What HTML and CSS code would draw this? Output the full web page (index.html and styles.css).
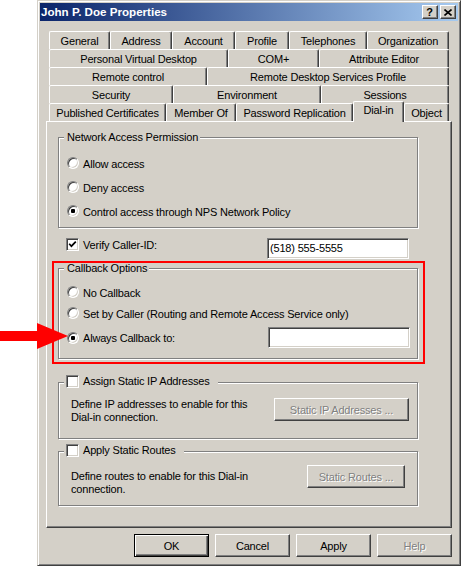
FILE: index.html
```html
<!DOCTYPE html>
<html>
<head>
<meta charset="utf-8">
<title>John P. Doe Properties</title>
<link rel="stylesheet" href="styles.css">
</head>
<body>
<div class="screen">
  <div class="window">
    <div class="titlebar">
      <span class="title">John P. Doe Properties</span>
      <div class="caption-btns">
        <span class="cbtn cbtn-help">?</span>
        <span class="cbtn"><svg width="8" height="7" viewBox="0 0 8 7"><path d="M0.5 0.5 L7.5 6.5 M7.5 0.5 L0.5 6.5" stroke="#000" stroke-width="1.6" fill="none"/></svg></span>
      </div>
    </div>
    <div class="content">
      <div class="tabs">
        <div class="tabrow">
          <div class="tab t-general">General</div>
          <div class="tab t-address">Address</div>
          <div class="tab t-account">Account</div>
          <div class="tab t-profile">Profile</div>
          <div class="tab t-telephones">Telephones</div>
          <div class="tab t-organization">Organization</div>
        </div>
        <div class="tabrow">
          <div class="tab t-pvd">Personal Virtual Desktop</div>
          <div class="tab t-com">COM+</div>
          <div class="tab t-attr">Attribute Editor</div>
        </div>
        <div class="tabrow">
          <div class="tab t-remote">Remote control</div>
          <div class="tab t-rds">Remote Desktop Services Profile</div>
        </div>
        <div class="tabrow">
          <div class="tab t-security">Security</div>
          <div class="tab t-env">Environment</div>
          <div class="tab t-sessions">Sessions</div>
        </div>
        <div class="tabrow">
          <div class="tab t-pub">Published Certificates</div>
          <div class="tab t-member">Member Of</div>
          <div class="tab t-pwd">Password Replication</div>
          <div class="tab t-dialin selected">Dial-in</div>
          <div class="tab t-object">Object</div>
        </div>
      </div>
      <div class="panel">
        <fieldset class="group group-nap">
          <legend class="legend">Network Access Permission</legend>
          <div class="radio-row"><span class="radio"></span><span class="opt">Allow access</span></div>
          <div class="radio-row"><span class="radio"></span><span class="opt">Deny access</span></div>
          <div class="radio-row"><span class="radio checked"></span><span class="opt">Control access through NPS Network Policy</span></div>
        </fieldset>

        <div class="verify-row">
          <span class="checkbox"><svg width="9" height="9" viewBox="0 0 9 9"><path d="M1.2 3.8 L3.4 6.2 L7.8 1.6" stroke="#000" stroke-width="1.7" fill="none"/></svg></span>
          <span class="check-label verify-label">Verify Caller-ID:</span>
          <span class="textbox">(518) 555-5555</span>
        </div>

        <div class="highlight">
          <fieldset class="group group-callback">
            <legend class="legend">Callback Options</legend>
            <div class="cb-row"><span class="radio"></span><span class="opt">No Callback</span></div>
            <div class="cb-row cb-row2"><span class="radio"></span><span class="opt">Set by Caller (Routing and Remote Access Service only)</span></div>
            <div class="cb-row cb-row3"><span class="radio checked"></span><span class="opt">Always Callback to:</span><span class="textbox textbox-callback"></span></div>
          </fieldset>
        </div>

        <fieldset class="group group-ip">
          <legend class="legend legend-check"><span class="checkbox"></span><span class="check-label">Assign Static IP Addresses</span></legend>
          <div class="group-body">
            <div class="desc">Define IP addresses to enable for this<br>Dial-in connection.</div>
            <span class="btn disabled btn-ip">Static IP Addresses ...</span>
          </div>
        </fieldset>

        <fieldset class="group group-routes">
          <legend class="legend legend-check"><span class="checkbox"></span><span class="check-label">Apply Static Routes</span></legend>
          <div class="group-body">
            <div class="desc desc-routes">Define routes to enable for this Dial-in<br>connection.</div>
            <span class="btn disabled btn-routes">Static Routes ...</span>
          </div>
        </fieldset>
      </div>
      <div class="buttons">
        <span class="btn btn-default">OK</span>
        <span class="btn">Cancel</span>
        <span class="btn">Apply</span>
        <span class="btn disabled">Help</span>
      </div>
    </div>
  </div>
  <svg class="arrow" width="70" height="28" viewBox="0 0 70 28"><polygon points="0,9 37,9 37,1 68,14 37,27 37,19 0,19" fill="#f00"/></svg>
</div>
</body>
</html>
```
FILE: styles.css
```css
* { box-sizing: border-box; }
html, body { margin: 0; padding: 0; background: #fff; }
body {
  font-family: "Liberation Sans", Arial, sans-serif;
  font-size: 11px;
  letter-spacing: -0.18px;
  color: #000;
}
.screen {
  position: relative;
  width: 461px;
  height: 567px;
  padding-left: 37px;
  overflow: hidden;
}
.window {
  width: 424px;
  height: 566px;
  background: #d4d0c8;
  border: 1px solid;
  border-color: #d4d0c8 #404040 #404040 #d4d0c8;
  box-shadow: inset 1px 1px #fff, inset -1px -1px #808080;
  padding: 2px;
  display: flex;
  flex-direction: column;
}
.titlebar {
  height: 18px;
  flex: none;
  display: flex;
  align-items: center;
  background: linear-gradient(to right, #0a246a, #a6caf0);
  padding: 0 2px 0 1px;
}
.title {
  flex: 1;
  color: #fff;
  font-weight: bold;
  font-size: 11.6px;
  letter-spacing: 0;
  line-height: 18px;
}
.caption-btns { display: flex; gap: 2px; }
.cbtn {
  width: 16px;
  height: 14px;
  background: #d4d0c8;
  border: 1px solid;
  border-color: #fff #404040 #404040 #fff;
  box-shadow: inset -1px -1px #808080;
  display: flex;
  align-items: center;
  justify-content: center;
  padding-right: 1px;
}
.cbtn-help {
  font-weight: bold;
  font-size: 11px;
  line-height: 12px;
  letter-spacing: 0;
}
.content {
  padding: 10px 6px 0 6px;
}
.tabs { padding: 0 3px; }
.tabrow { display: flex; height: 18px; }
.tab {
  flex: none;
  height: 18px;
  border-top: 1px solid #fff;
  border-left: 1px solid #fff;
  border-right: 1px solid #404040;
  border-top-left-radius: 2px;
  border-top-right-radius: 2px;
  box-shadow: inset -1px 0 #808080;
  text-align: center;
  padding-top: 1px;
  line-height: 16px;
  white-space: nowrap;
  background: #d4d0c8;
}
.tab.selected {
  position: relative;
  z-index: 1;
  height: 21px;
  margin-top: -2px;
  margin-bottom: -1px;
  padding-top: 1px;
  line-height: 15px;
}
.t-general { width: 61px; }
.t-address { width: 62px; }
.t-account { width: 63px; }
.t-profile { width: 54px; }
.t-telephones { width: 78px; }
.t-organization { width: 82px; }
.t-pvd { width: 179px; }
.t-com { width: 91px; }
.t-attr { width: 130px; }
.t-remote { width: 158px; }
.t-rds { width: 242px; }
.t-security { width: 124px; }
.t-env { width: 148px; }
.t-sessions { width: 128px; }
.t-pub { width: 117px; }
.t-member { width: 70px; }
.t-pwd { width: 117px; }
.t-dialin { width: 51px; }
.t-object { width: 45px; }

.panel {
  height: 407px;
  border: 1px solid;
  border-color: #fff #404040 #404040 #fff;
  box-shadow: inset -1px -1px #808080;
  padding: 0 26px 0 5px;
}
.group {
  margin: 0 0 0 6px;
  min-width: 0;
  width: 360px;
  border: 1px solid #808080;
  box-shadow: inset 1px 1px #fff, 1px 1px #fff;
  padding: 0 8px 0 5px;
}
.legend {
  line-height: 11px;
  padding: 0 2px 0 3px;
  background: #d4d0c8;
  white-space: nowrap;
}
.group-nap {
  margin-top: 10px;
  padding-top: 8px;
  padding-bottom: 4px;
}
.radio-row {
  height: 24px;
  display: flex;
  align-items: center;
  gap: 4px;
  padding-left: 3px;
}
.opt { padding-top: 1px; white-space: nowrap; }
.radio {
  flex: none;
  position: relative;
  width: 12px;
  height: 12px;
  border-radius: 50%;
  background: #fff;
  border: 1px solid;
  border-color: #808080 #fff #fff #808080;
  box-shadow: inset 1px 1px #404040, inset -1px -1px #d4d0c8;
}
.radio.checked::after {
  content: "";
  position: absolute;
  left: 3px;
  top: 3px;
  width: 4px;
  height: 4px;
  border-radius: 1px;
  background: #000;
}
.checkbox {
  flex: none;
  width: 13px;
  height: 13px;
  background: #fff;
  border: 1px solid;
  border-color: #808080 #fff #fff #808080;
  box-shadow: inset 1px 1px #404040, inset -1px -1px #d4d0c8;
  display: flex;
  align-items: center;
  justify-content: center;
}
.check-label {
  line-height: 13px;
  margin-left: 4px;
  white-space: nowrap;
}
.verify-label { padding-top: 1px; }
.verify-row {
  margin-top: 10px;
  height: 21px;
  display: flex;
  align-items: flex-start;
  padding: 0 16px 0 14px;
}
.textbox {
  margin-left: auto;
  width: 142px;
  height: 21px;
  background: #fff;
  border: 1px solid;
  border-color: #808080 #fff #fff #808080;
  box-shadow: inset 1px 1px #404040, inset -1px -1px #d4d0c8;
  padding: 3px 2px 0 2px;
  line-height: 13px;
  white-space: nowrap;
}
.highlight {
  margin-top: 2px;
  border: 2px solid #f00;
  padding: 0 5px 3px 4px;
}
.highlight .group { margin-left: 0; }
.group-callback {
  padding-top: 10px;
  padding-bottom: 10px;
  padding-right: 7px;
}
.cb-row {
  height: 16px;
  display: flex;
  align-items: center;
  gap: 4px;
  padding-left: 3px;
}
.cb-row2 { margin-top: 5px; }
.cb-row3 { margin-top: 6px; height: 21px; }
.textbox-callback { width: 142px; }

.legend-check {
  display: flex;
  align-items: flex-start;
  height: 15px;
  line-height: 13px;
  padding: 0 8px 0 2px;
}
.group-ip {
  margin-top: 11px;
  padding-top: 7px;
  padding-bottom: 14px;
}
.group-routes {
  margin-top: 5px;
  padding-top: 6px;
  padding-bottom: 9px;
  padding-right: 12px;
}
.group-body {
  display: flex;
  align-items: flex-start;
}
.desc {
  line-height: 13px;
  margin-left: 7px;
  padding-top: 1px;
  white-space: nowrap;
}
.desc-routes { margin-top: 4px; }
.btn {
  flex: none;
  display: flex;
  align-items: center;
  justify-content: center;
  width: 75px;
  height: 23px;
  background: #d4d0c8;
  border: 1px solid;
  border-color: #fff #404040 #404040 #fff;
  box-shadow: inset -1px -1px #808080;
  white-space: nowrap;
  padding-top: 1px;
}
.btn.disabled {
  color: #808080;
  text-shadow: 1px 1px #fff;
}
.btn-ip { margin-left: auto; margin-top: 1px; width: 135px; }
.btn-routes { margin-left: auto; width: 98px; }
.btn-default {
  border-color: #000;
  box-shadow: inset 1px 1px #fff, inset -1px -1px #404040, inset -2px -2px #808080;
}
.buttons {
  margin-top: 6px;
  display: flex;
  justify-content: flex-end;
  gap: 6px;
}
.arrow {
  position: absolute;
  left: 0;
  top: 322px;
}
```
